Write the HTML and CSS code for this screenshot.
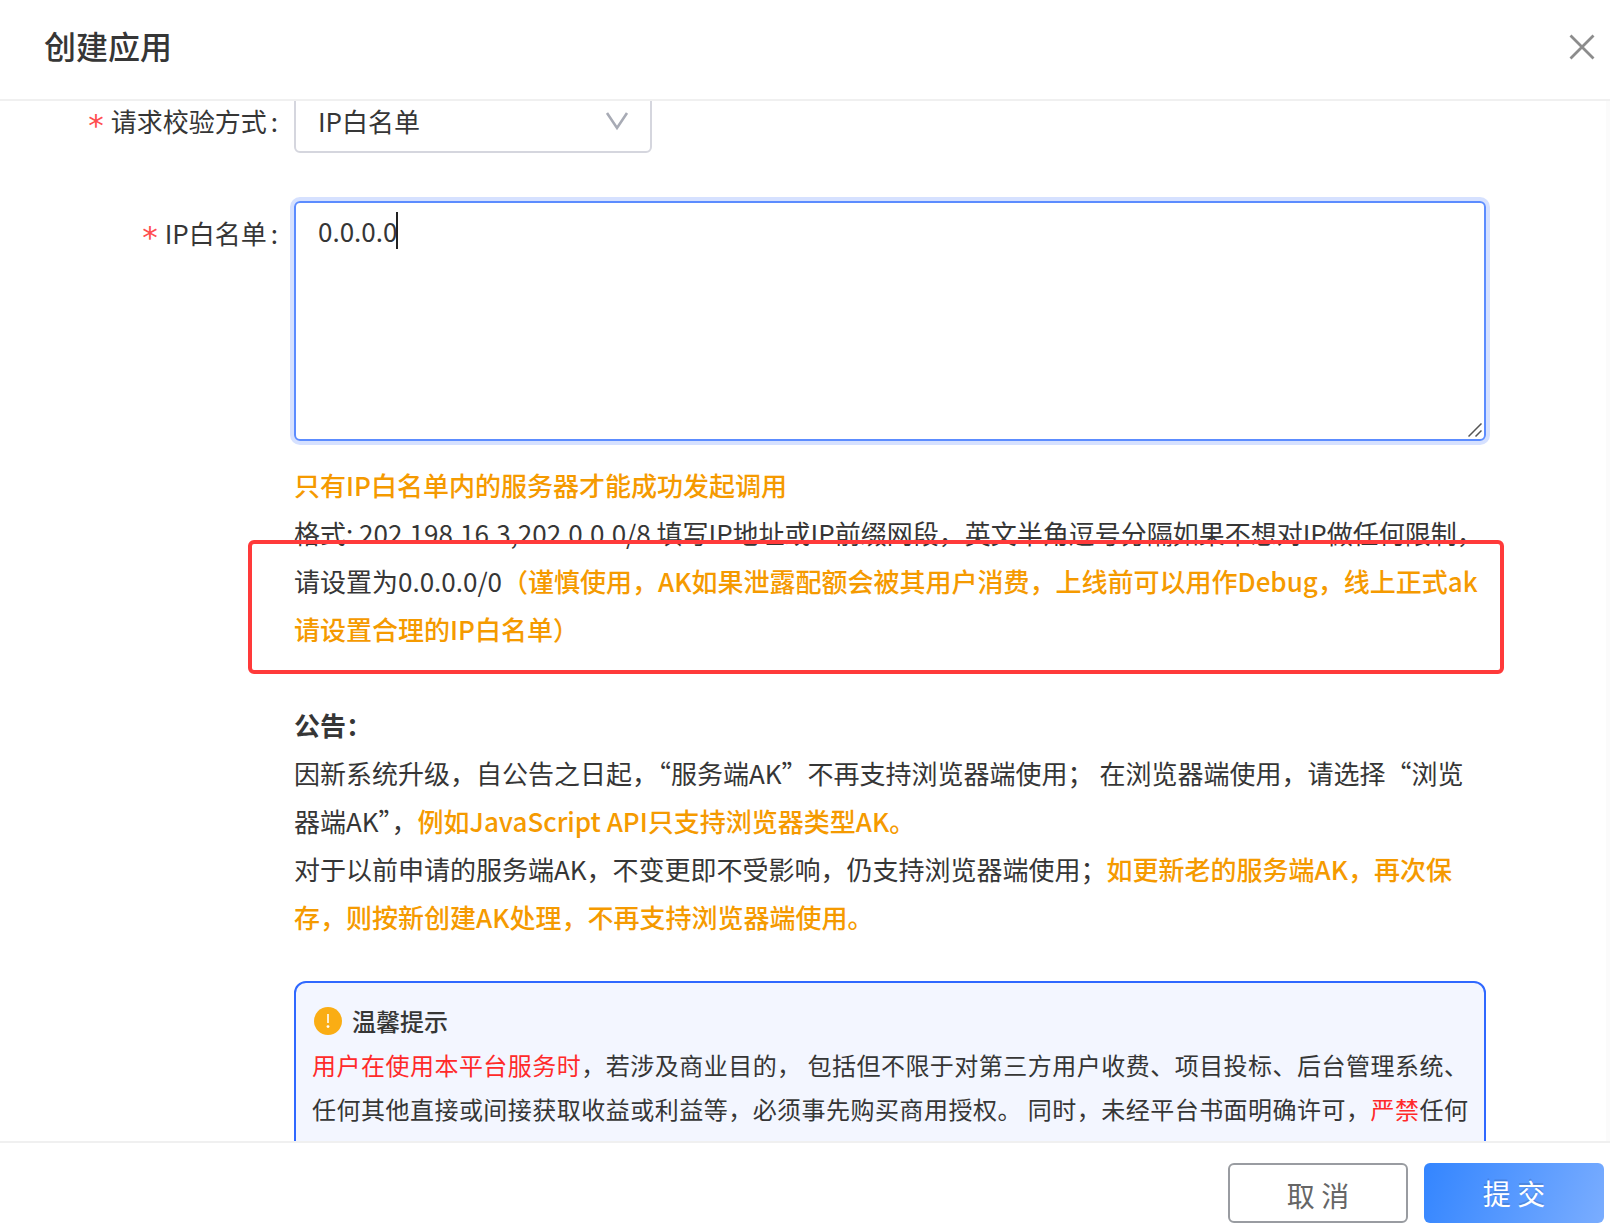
FILE: index.html
```html
<!DOCTYPE html>
<html lang="zh-CN">
<head>
    <meta charset="UTF-8">
    <meta name="viewport" content="width=device-width, initial-scale=1.0">
    <title>创建应用</title>
    <link rel="stylesheet" href="styles.css">
</head>
<body>
    <div class="drawer">
        <div class="drawer-header">
            <div class="drawer-title">创建应用</div>
            <svg class="close-icon" viewBox="0 0 28 28">
                <path d="M2.5 2.5L25.5 25.5M25.5 2.5L2.5 25.5"/>
            </svg>
        </div>

        <div class="drawer-body">
            <div class="form-item">
                <div class="form-label"><span class="required">*</span>请求校验方式<span class="colon">:</span></div>
                <div class="select">
                    <span>IP白名单</span>
                    <svg class="arrow-icon" viewBox="0 0 24 20">
                        <path d="M2 2L12 17L22 2"/>
                    </svg>
                </div>
            </div>

            <div class="form-item ip-item">
                <div class="form-label"><span class="required">*</span>IP白名单<span class="colon">:</span></div>
                <div class="form-control">
                    <div class="textarea">
                        <span class="textarea-text">0.0.0.0</span><span class="caret"></span>
                        <svg class="resize-icon" viewBox="0 0 14 14">
                            <path d="M0.5 13.5L13.5 0.5M7.5 13.5L13.5 7.5"/>
                        </svg>
                    </div>
                    <div class="help">
                        <p class="warn">只有IP白名单内的服务器才能成功发起调用</p>
                        <p>格式: 202.198.16.3,202.0.0.0/8 填写IP地址或IP前缀网段，英文半角逗号分隔如果不想对IP做任何限制，<br>请设置为0.0.0.0/0<span class="warn">（谨慎使用，AK如果泄露配额会被其用户消费，上线前可以用作Debug，线上正式ak<br>请设置合理的IP白名单）</span></p>
                        <div class="mark"></div>
                    </div>
                    <div class="notice">
                        <p class="notice-title">公告：</p>
                        <p>因新系统升级，自公告之日起，“服务端AK”不再支持浏览器端使用； 在浏览器端使用，请选择“浏览<br>器端AK”，<span class="warn">例如JavaScript API只支持浏览器类型AK。</span></p>
                        <p>对于以前申请的服务端AK，不变更即不受影响，仍支持浏览器端使用；<span class="warn">如更新老的服务端AK，再次保<br>存，则按新创建AK处理，不再支持浏览器端使用。</span></p>
                    </div>
                    <div class="tips">
                        <div class="tips-title">
                            <svg class="tips-icon" viewBox="0 0 28 28">
                                <circle cx="14" cy="14" r="14"/>
                                <path d="M13.2 7h1.6v9h-1.6z"/>
                                <circle class="dot" cx="14" cy="19.6" r="1.4"/>
                            </svg>
                            温馨提示
                        </div>
                        <p><span class="danger">用户在使用本平台服务时</span>，若涉及商业目的， 包括但不限于对第三方用户收费、项目投标、后台管理系统、<br>任何其他直接或间接获取收益或利益等，必须事先购买商用授权。 同时，未经平台书面明确许可，<span class="danger">严禁</span>任何</p>
                    </div>
                </div>
            </div>
        </div>

        <div class="drawer-footer">
            <button class="btn">取 消</button>
            <button class="btn btn-primary">提 交</button>
        </div>
    </div>
</body>
</html>
```

FILE: styles.css
```css
* {
    box-sizing: border-box;
}
body {
    margin: 0;
    font-family: 'Noto Sans CJK SC', sans-serif;
    font-size: 26px;
    line-height: 48px;
    color: #363636;
    background-color: #fff;
}
p {
    margin: 0;
    white-space: nowrap;
}
.drawer {
    display: flex;
    flex-direction: column;
    height: 1224px;
    overflow: hidden;
}
.drawer-header {
    display: flex;
    justify-content: space-between;
    align-items: center;
    height: 101px;
    padding: 0 14px 6px 44px;
    border-bottom: 2px solid #f0f0f0;
}
.drawer-title {
    padding-bottom: 4px;
    font-size: 32px;
    font-weight: 500;
}
.close-icon {
    width: 28px;
    height: 28px;
    fill: none;
    stroke: #8c8c8c;
    stroke-width: 2.8;
}
.drawer-body {
    flex: 1;
    min-height: 0;
    overflow: hidden;
    border-right: 4px solid #fbfbfb;
}
.form-item {
    display: grid;
    grid-template-columns: 294px 1192px;
}
/* first row is scrolled partly under the header */
.form-item:first-child {
    margin-top: -12px;
}
.ip-item {
    margin-top: 48px;
}
.form-label {
    display: flex;
    justify-content: flex-end;
    height: 64px;
    line-height: 64px;
}
.required {
    margin-right: 7px;
    padding-top: 4px;
    font-family: 'DejaVu Sans', sans-serif;
    font-size: 31px;
    color: #ff4d4f;
}
.colon {
    margin: 0 16px 0 4px;
}
.select {
    display: flex;
    justify-content: space-between;
    align-items: center;
    width: 358px;
    height: 64px;
    padding: 0 21px 0 22px;
    border: 2px solid #d5d6de;
    border-radius: 6px;
}
.arrow-icon {
    width: 24px;
    height: 20px;
    fill: none;
    stroke: #a8abb5;
    stroke-width: 2.6;
}
.textarea {
    position: relative;
    display: flex;
    align-items: flex-start;
    height: 240px;
    padding: 4px 22px;
    border: 2px solid #5c8cff;
    border-radius: 6px;
    box-shadow: 0 0 0 4px #d6e1ff;
}
.caret {
    width: 2px;
    height: 37px;
    margin: 5px 0 0 -1px;
    background-color: #222;
}
.resize-icon {
    position: absolute;
    right: 2px;
    bottom: 2px;
    width: 14px;
    height: 14px;
    fill: none;
    stroke: #555;
    stroke-width: 1.5;
}
.help {
    position: relative;
    margin-top: 20px;
}
.warn {
    font-weight: 500;
    color: #f59a00;
}
/* red frame drawn over the help text */
.mark {
    position: absolute;
    top: 79px;
    left: -46px;
    width: 1256px;
    height: 134px;
    border: 4px solid #ff3a3a;
    border-radius: 6px;
}
.notice {
    margin-top: 48px;
}
.notice-title {
    font-weight: 700;
}
.tips {
    margin-top: 40px;
    padding: 16px;
    height: 260px;
    border: 2px solid #2f68ff;
    border-radius: 12px;
    background-color: #f3f6ff;
    font-size: 24px;
    line-height: 44px;
    letter-spacing: 0.48px;
}
.tips-title {
    display: flex;
    align-items: center;
    gap: 10px;
    padding-left: 2px;
    font-weight: 500;
    letter-spacing: 0;
}
.tips-icon {
    width: 28px;
    height: 28px;
    fill: #faad14;
}
.tips-icon path,
.tips-icon .dot {
    fill: #fff;
}
.danger {
    color: #ff2a2a;
}
.drawer-footer {
    display: flex;
    justify-content: flex-end;
    gap: 16px;
    height: 83px;
    padding: 20px 6px 0;
    border-top: 2px solid #f0f0f0;
}
.btn {
    width: 180px;
    height: 60px;
    padding: 4px 0 0;
    border: 2px solid #999ca1;
    border-radius: 6px;
    background-color: #fff;
    font-family: inherit;
    font-size: 28px;
    line-height: 40px;
    color: #666;
}
.btn-primary {
    padding: 0;
    border: none;
    background: linear-gradient(110deg, #3385ff, #7aadff);
    color: #fff;
    text-shadow: 0 -2px 0 rgba(0, 0, 0, 0.12);
}
```
